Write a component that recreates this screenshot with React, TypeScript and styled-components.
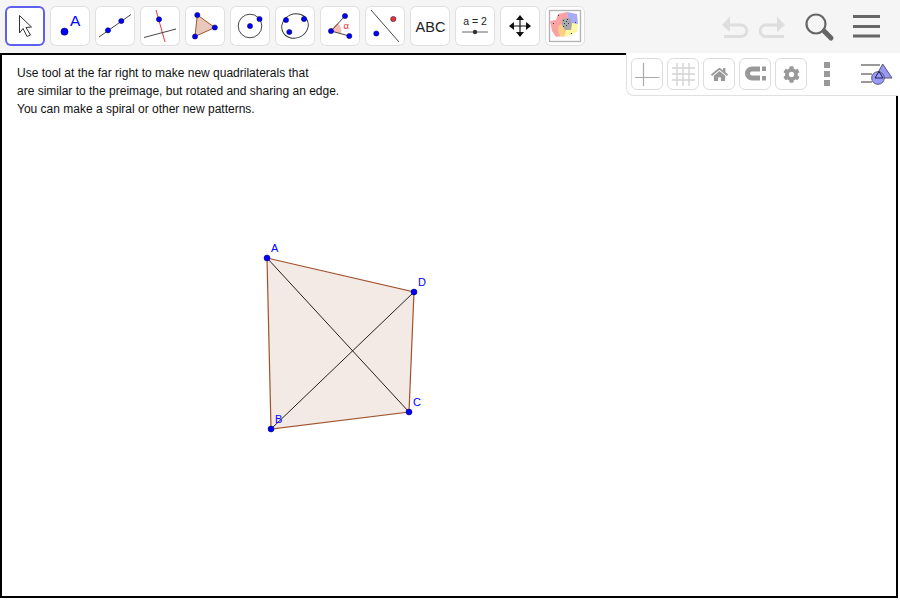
import * as React from 'react';
import styled, { createGlobalStyle } from 'styled-components';
import { FaCog, FaHome } from 'react-icons/fa';

const BLUE = '#0000ff';
const EDGE = '#a0522d';

const GlobalStyle = createGlobalStyle`
  html, body {
    margin: 0;
    padding: 0;
    background: #ffffff;
  }
`;

const Page = styled.div`
  width: 898px;
  height: 598px;
  position: relative;
  display: flex;
  flex-direction: column;
  font-family: "Liberation Sans", Arial, sans-serif;
`;
const Toolbar = styled.div`
  height: 53px;
  flex: none;
  width: 900px;
  box-sizing: border-box;
  background: #f5f5f5;
  display: flex;
  align-items: flex-start;
  padding: 6px 0 0 5px;
`;
const Tools = styled.div`
  display: flex;
  gap: 5px;
`;
const ToolButton = styled.div<{ $selected?: boolean }>`
  width: 40px;
  height: 40px;
  box-sizing: border-box;
  background: #ffffff;
  border-radius: 6px;
  box-shadow: inset 0 0 0 ${(p) => (p.$selected ? '2px #6060ee' : '1px #e0e0e0')};
  svg {
    display: block;
  }
`;
const Actions = styled.div`
  margin-left: auto;
  display: flex;
  svg {
    display: block;
  }
`;
const Canvas = styled.div`
  flex: 1;
  position: relative;
  border: 2px solid #000000;
  background: #ffffff;
  overflow: hidden;
`;
const Note = styled.p`
  margin: 0;
  padding: 9px 0 0 15px;
  font-size: 12px;
  line-height: 18px;
  color: #111111;
`;
const Figure = styled.svg`
  position: absolute;
  left: -2px;
  top: -55px;
  width: 898px;
  height: 598px;
  font-family: "Liberation Sans", Arial, sans-serif;
`;
const StylePanel = styled.div`
  position: absolute;
  right: 0;
  top: 53px;
  width: 272px;
  height: 43px;
  box-sizing: border-box;
  background: #ffffff;
  border-left: 1px solid #e0e0e0;
  border-bottom: 1px solid #e0e0e0;
  border-bottom-left-radius: 8px;
  padding: 5px 0 0 4px;
  display: flex;
  align-items: flex-start;
`;
const StyleButtons = styled.div`
  display: flex;
  gap: 4px;
`;
const StyleButton = styled.div`
  width: 32px;
  height: 32px;
  box-sizing: border-box;
  border: 1px solid #dcdcdc;
  border-radius: 6px;
  display: flex;
  align-items: center;
  justify-content: center;
  color: #999999;
  svg {
    display: block;
  }
`;
const MoreDots = styled.div`
  width: 6px;
  margin: 4px 0 0 17px;
  display: flex;
  flex-direction: column;
  gap: 3px;
`;
const Dot = styled.span`
  width: 6px;
  height: 6px;
  background: #999999;
`;
const StyleToggle = styled.svg`
  display: block;
  margin-left: 28px;
  margin-top: 3px;
`;

const Pt = ({ x, y, r = 2.6, fill = BLUE }: { x: number; y: number; r?: number; fill?: string }) => (
  <circle cx={x} cy={y} r={r} fill={fill} stroke="#00004a" strokeWidth={0.5} />
);

// every tool icon is drawn in page coordinates, the viewBox follows the button
const Tool = ({ x, selected, children }: { x: number; selected?: boolean; children: React.ReactNode }) => (
  <ToolButton $selected={selected}>
    <svg width="40" height="40" viewBox={`${x} 6 40 40`} fontFamily="Liberation Sans, Arial, sans-serif">
      {children}
    </svg>
  </ToolButton>
);

const LogoIcon = () => (
  <>
    <rect x="549.5" y="10.5" width="31" height="31" fill="#ffffff" stroke="#b4b4b4" strokeWidth="1.4" />
    <path d="M550 21 L556 20 L558 14 L567 12 L569 22 L560 30 L562 36 L556 37 L552 31Z" fill="#f9a3a3" />
    <path d="M567 12 L577 14 L578 24 L572 24 L568 20Z" fill="#aaaaf5" />
    <path d="M572 23 L578 24 L577 32 L566 37 L562 36 L565 30 L571 29Z" fill="#fdf6a2" />
    <path d="M559 25 L564 24 L566 31 L564 37 L560 36 L558 30Z" fill="#fdcf85" />
    <path d="M562 19 L570 18 L572 24 L571 30 L565 30 L562 25Z" fill="#a8a8a8" />
    <g fill="#333366">
      <rect x="563" y="20" width="1" height="1" />
      <rect x="566" y="21" width="1" height="1" />
      <rect x="568" y="23" width="1" height="1" />
      <rect x="564" y="23" width="1" height="1" />
      <rect x="566" y="25" width="1" height="1" />
      <rect x="563" y="26" width="1" height="1" />
      <rect x="567" y="19" width="1" height="1" />
      <rect x="553" y="23" width="1" height="1" />
      <rect x="558" y="15" width="1" height="1" />
      <rect x="575" y="22" width="1" height="1" />
      <rect x="571" y="33" width="1" height="1" />
    </g>
  </>
);

const Arrows = () => (
  <g fill="#111111" stroke="#111111">
    <path d="M510 26 H530 M520 16 V36" strokeWidth="1.2" fill="none" />
    <path d="M509 26 L514 22 V30Z M531 26 L526 22 V30Z M520 15 L516 20 H524Z M520 37 L516 32 H524Z" strokeWidth="0" />
  </g>
);

const App = () => (
  <Page>
    <GlobalStyle />
    <Toolbar>
      <Tools>
        <Tool x={5} selected>
          <path d="M19.5 15.5 L31.5 27 L26 27.5 L30.5 35 L27 36.5 L23 28.5 L19.5 33Z" fill="#ffffff" stroke="#333333" strokeWidth="1" />
        </Tool>
        <Tool x={50}>
          <circle cx="64.5" cy="31.7" r="3.6" fill={BLUE} stroke="#00004a" strokeWidth="0.5" />
          <text x="70" y="25.5" fontSize="15.5" fill={BLUE}>A</text>
        </Tool>
        <Tool x={95}>
          <line x1="99" y1="37" x2="131" y2="14.5" stroke="#333333" strokeWidth="0.9" />
          <Pt x={108} y={30.3} />
          <Pt x={121.3} y={21} />
        </Tool>
        <Tool x={140}>
          <line x1="156" y1="10" x2="165" y2="42" stroke="#f02020" strokeWidth="0.9" />
          <line x1="144" y1="37.5" x2="176" y2="29" stroke="#333333" strokeWidth="0.9" />
          <Pt x={159} y={19.3} />
        </Tool>
        <Tool x={185}>
          <path d="M197.3 15 L214.8 27.5 L195 36.5Z" fill="#e9c8bb" stroke={EDGE} strokeWidth="1" />
          <Pt x={197.3} y={15} />
          <Pt x={214.8} y={27.5} />
          <Pt x={195} y={36.5} />
        </Tool>
        <Tool x={230}>
          <circle cx="250" cy="26" r="11.8" fill="none" stroke="#333333" strokeWidth="0.9" />
          <Pt x={250} y={26} />
          <Pt x={259.5} y={19} />
        </Tool>
        <Tool x={275}>
          <ellipse cx="295" cy="26" rx="13.5" ry="12" fill="none" stroke="#333333" strokeWidth="0.9" transform="rotate(-25 295 26)" />
          <Pt x={286} y={20} />
          <Pt x={304} y={19} />
          <Pt x={289.3} y={32} />
        </Tool>
        <Tool x={320}>
          <path d="M331 31 L338 23.5 A11 11 0 0 1 341 33.7Z" fill="#f5bdb4" />
          <line x1="331" y1="31" x2="345" y2="16" stroke="#333333" strokeWidth="0.9" />
          <line x1="331" y1="31" x2="349.3" y2="36" stroke="#333333" strokeWidth="0.9" />
          <line x1="331" y1="31" x2="338" y2="23.5" stroke={EDGE} strokeWidth="1" />
          <text x="343.5" y="29" fontSize="9.5" fill="#f03030">α</text>
          <Pt x={345} y={16} />
          <Pt x={331} y={31} />
          <Pt x={349.3} y={36} />
        </Tool>
        <Tool x={365}>
          <line x1="371" y1="10" x2="399" y2="42" stroke="#333333" strokeWidth="0.9" />
          <Pt x={393.3} y={19} fill="#f03030" />
          <Pt x={376.3} y={33.5} />
        </Tool>
        <Tool x={410}>
          <text x="430.5" y="31.5" fontSize="14.5" fill="#222222" textAnchor="middle">ABC</text>
        </Tool>
        <Tool x={455}>
          <text x="475" y="25" fontSize="10.5" fill="#222222" textAnchor="middle">a = 2</text>
          <line x1="462" y1="32" x2="488" y2="32" stroke="#555555" strokeWidth="0.9" />
          <circle cx="475" cy="32" r="2.2" fill="#333333" />
        </Tool>
        <Tool x={500}>
          <Arrows />
        </Tool>
        <Tool x={545}>
          <LogoIcon />
        </Tool>
      </Tools>
      <Actions>
        <svg width="178" height="47" viewBox="722 6 178 47">
          <g fill="none" stroke="#dedede" strokeWidth="3">
            <path d="M727 25 H741 A5.8 5.8 0 0 1 741 36.6 H724" />
            <path d="M780 25 H766 A5.8 5.8 0 0 0 766 36.6 H784" />
          </g>
          <path d="M722 25 L730 16.5 V32Z M785 25 L777 16.5 V32Z" fill="#dedede" />
          <circle cx="816" cy="24" r="9.5" fill="none" stroke="#666666" strokeWidth="2.2" />
          <line x1="824" y1="31" x2="831" y2="38" stroke="#666666" strokeWidth="5" strokeLinecap="round" />
          <path d="M853 16.5 H880 M853 26.5 H880 M853 36 H880" stroke="#666666" strokeWidth="3.2" />
        </svg>
      </Actions>
    </Toolbar>
    <Canvas>
      <Note>
        Use tool at the far right to make new quadrilaterals that
        <br />
        are similar to the preimage, but rotated and sharing an edge.
        <br />
        You can make a spiral or other new patterns.
      </Note>
      <Figure viewBox="0 0 898 598">
        <path d="M267 258 L414 292 L409 412 L271 429Z" fill="#f3e9e5" stroke={EDGE} strokeWidth="1.2" />
        <line x1="267" y1="258" x2="409" y2="412" stroke="#222222" strokeWidth="1" />
        <line x1="271" y1="429" x2="414" y2="292" stroke="#222222" strokeWidth="1" />
        <Pt x={267} y={258} r={3} />
        <Pt x={414} y={292} r={3} />
        <Pt x={409} y={412} r={3} />
        <Pt x={271} y={429} r={3} />
        <g fontSize="11" fill={BLUE}>
          <text x="271" y="252">A</text>
          <text x="275" y="423">B</text>
          <text x="413" y="406">C</text>
          <text x="418" y="286">D</text>
        </g>
      </Figure>
    </Canvas>
    <StylePanel>
      <StyleButtons>
        <StyleButton>
          <svg width="30" height="30" viewBox="632 59 30 30">
            <path d="M635 77.5 H659.5 M643.5 63 V86" stroke="#aaaaaa" strokeWidth="1.2" fill="none" />
          </svg>
        </StyleButton>
        <StyleButton>
          <svg width="30" height="30" viewBox="0 0 30 30">
            <path d="M9 4 V27 M15 4 V27 M21 4 V27 M4 9 H27 M4 15 H27 M4 21 H27" stroke="#d4d4d4" strokeWidth="1.4" fill="none" />
          </svg>
        </StyleButton>
        <StyleButton>
          <FaHome size={17} />
        </StyleButton>
        <StyleButton>
          <svg width="30" height="30" viewBox="0 0 30 30">
            <path d="M20 10 H12 A4.5 4.5 0 0 0 12 19 H20" fill="none" stroke="#999999" strokeWidth="5" />
            <path d="M22 7.5 H26 V12 H22Z M22 17 H26 V21.5 H22Z" fill="#999999" />
          </svg>
        </StyleButton>
        <StyleButton>
          <FaCog size={17} />
        </StyleButton>
      </StyleButtons>
      <MoreDots>
        <Dot />
        <Dot />
        <Dot />
      </MoreDots>
      <StyleToggle width="36" height="30" viewBox="858 61 36 30">
        <path d="M861 65 H880 M861 74 H872 M861 82 H872" stroke="#999999" strokeWidth="2" />
        <path d="M882.7 64 L892 78 H875Z" fill="#9a9af5" stroke="#555577" strokeWidth="1" />
        <circle cx="878" cy="78" r="6.3" fill="#9a9aff" stroke="#555577" strokeWidth="1" />
        <path d="M875 78 L879 71.5 L883 78Z" fill="none" stroke="#222244" strokeWidth="1" />
      </StyleToggle>
    </StylePanel>
  </Page>
);

export default App;
